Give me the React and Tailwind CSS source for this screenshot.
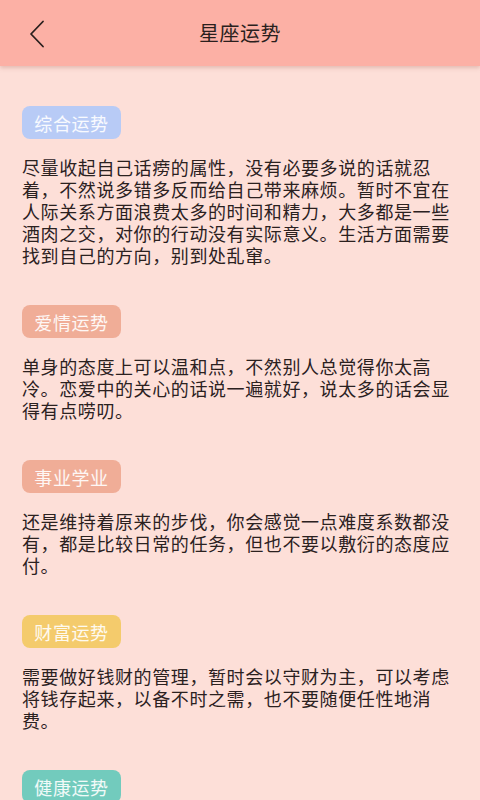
import React from "react";

const sections = [
  {
    tag: "综合运势",
    color: "bg-[#b8cbf6]",
    text: "尽量收起自己话痨的属性，没有必要多说的话就忍着，不然说多错多反而给自己带来麻烦。暂时不宜在人际关系方面浪费太多的时间和精力，大多都是一些酒肉之交，对你的行动没有实际意义。生活方面需要找到自己的方向，别到处乱窜。",
  },
  {
    tag: "爱情运势",
    color: "bg-[#f0ad97]",
    text: "单身的态度上可以温和点，不然别人总觉得你太高冷。恋爱中的关心的话说一遍就好，说太多的话会显得有点唠叨。",
  },
  {
    tag: "事业学业",
    color: "bg-[#f0ad97]",
    text: "还是维持着原来的步伐，你会感觉一点难度系数都没有，都是比较日常的任务，但也不要以敷衍的态度应付。",
  },
  {
    tag: "财富运势",
    color: "bg-[#f4cb6c]",
    text: "需要做好钱财的管理，暂时会以守财为主，可以考虑将钱存起来，以备不时之需，也不要随便任性地消费。",
  },
  {
    tag: "健康运势",
    color: "bg-[#72cbbd]",
    text: "保持良好的作息习惯，多喝水，适当运动，身体状况会比较稳定。",
  },
];

export default function App() {
  return (
    <div
      className="w-[480px] h-[800px] overflow-hidden bg-[#fddfd8] flex flex-col"
      style={{ fontFamily: '"Noto Sans CJK SC", "Noto Sans", sans-serif' }}
    >
      <div className="relative h-[66px] shrink-0 bg-[#fcb0a5] flex items-center justify-center shadow-[0_2px_4px_rgba(180,120,110,0.35)] z-10">
        <svg
          className="absolute left-[28px] top-[20px]"
          width="18"
          height="28"
          viewBox="0 0 18 28"
          fill="none"
        >
          <path d="M15 1.5 L3 14 L15 26.5" stroke="#2a1f1d" strokeWidth="1.8" strokeLinecap="round" strokeLinejoin="round" />
        </svg>
        <div className="text-[20px] text-[#2a1f1d] tracking-[0.5px] leading-none">星座运势</div>
      </div>
      <div className="flex flex-col px-[22px] pt-[40px] gap-[39px]">
        {sections.map((s) => (
          <div key={s.tag} className="flex flex-col items-start gap-[17px]">
            <div
              className={`${s.color} h-[33px] w-[99px] rounded-[8px] flex items-center justify-center text-[18px] text-white/90 tracking-[0.6px] leading-none`}
            >
              {s.tag}
            </div>
            <p className="text-[18px] leading-[22px] tracking-[0.6px] text-[#2b211f] w-full">
              {s.text}
            </p>
          </div>
        ))}
      </div>
    </div>
  );
}
